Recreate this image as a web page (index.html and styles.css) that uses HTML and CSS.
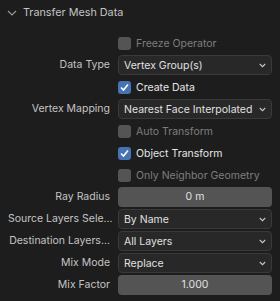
FILE: index.html
```html
<!DOCTYPE html>
<html>
<head>
  <title>Transfer Mesh Data</title>
  <link rel="stylesheet" href="styles.css">
</head>
<body>
  <div class="panel">
    <div class="panel-header">
      <svg class="chev" width="10" height="6" viewBox="0 0 10 6"><path d="M1 1 L5 5 L9 1" fill="none" stroke="#9a9a9a" stroke-width="1.1"/></svg>
      <span class="title">Transfer Mesh Data</span>
    </div>

    <div class="panel-body">
      <div class="label"></div>
      <div class="check off dim"><span class="box"></span>Freeze Operator</div>

      <div class="label">Data Type</div>
      <div class="dropdown">Vertex Group(s)<svg class="arrow" width="7" height="5" viewBox="0 0 7 5"><path d="M0.8 1 L3.5 3.7 L6.2 1" fill="none" stroke="#c8c8c8" stroke-width="1.1"/></svg></div>

      <div class="label"></div>
      <div class="check on"><span class="box"><svg width="13" height="13" viewBox="0 0 13 13"><path d="M3 6.5 L5.5 9 L10 3.5" fill="none" stroke="#fff" stroke-width="1.6"/></svg></span>Create Data</div>

      <div class="label">Vertex Mapping</div>
      <div class="dropdown">Nearest Face Interpolated<svg class="arrow" width="7" height="5" viewBox="0 0 7 5"><path d="M0.8 1 L3.5 3.7 L6.2 1" fill="none" stroke="#c8c8c8" stroke-width="1.1"/></svg></div>

      <div class="label"></div>
      <div class="check off dim"><span class="box"></span>Auto Transform</div>

      <div class="label"></div>
      <div class="check on"><span class="box"><svg width="13" height="13" viewBox="0 0 13 13"><path d="M3 6.5 L5.5 9 L10 3.5" fill="none" stroke="#fff" stroke-width="1.6"/></svg></span>Object Transform</div>

      <div class="label"></div>
      <div class="check off dim"><span class="box"></span>Only Neighbor Geometry</div>

      <div class="label">Ray Radius</div>
      <div class="number">0 m</div>

      <div class="label">Source Layers Sele...</div>
      <div class="dropdown">By Name<svg class="arrow" width="7" height="5" viewBox="0 0 7 5"><path d="M0.8 1 L3.5 3.7 L6.2 1" fill="none" stroke="#c8c8c8" stroke-width="1.1"/></svg></div>

      <div class="label">Destination Layers...</div>
      <div class="dropdown">All Layers<svg class="arrow" width="7" height="5" viewBox="0 0 7 5"><path d="M0.8 1 L3.5 3.7 L6.2 1" fill="none" stroke="#c8c8c8" stroke-width="1.1"/></svg></div>

      <div class="label">Mix Mode</div>
      <div class="dropdown">Replace<svg class="arrow" width="7" height="5" viewBox="0 0 7 5"><path d="M0.8 1 L3.5 3.7 L6.2 1" fill="none" stroke="#c8c8c8" stroke-width="1.1"/></svg></div>

      <div class="label">Mix Factor</div>
      <div class="number">1.000</div>
    </div>
  </div>
</body>
</html>
```

FILE: styles.css
```css
body { margin: 0; background: #1d1d1d; font-family: Inter, "DejaVu Sans", sans-serif; font-size: 10.5px; color: #c4c4c4; white-space: nowrap; }
.panel { width: 280px; height: 301px; background: #1d1d1d; }
.panel-header { height: 28px; display: flex; align-items: center; padding-left: 7px; box-sizing: border-box; padding-bottom: 3px; }
.chev { margin-right: 6px; }
.title { color: #c4c4c4; font-size: 10.8px; }
.panel-body { display: grid; grid-template-columns: 102px 1fr; column-gap: 8px; row-gap: 2px; padding: 5px 8px 0 8px; grid-auto-rows: 20px; }
.label { text-align: right; line-height: 20px; }
.check { display: flex; align-items: center; color: #e6e6e6; }
.check.dim { color: #7d7d7d; }
.box { width: 13px; height: 13px; border-radius: 3px; background: #545454; margin-right: 5px; flex: none; }
.check.on .box { background: #4772b3; }
.box svg { display: block; }
.dropdown { display: flex; align-items: center; justify-content: space-between; background: #282828; border: 1px solid #3a3a3a; border-radius: 4px; padding: 0 5px 0 5px; color: #e0e0e0; box-sizing: border-box; }
.number { background: #545454; border-radius: 4px; text-align: center; line-height: 20px; color: #e0e0e0; }
```
